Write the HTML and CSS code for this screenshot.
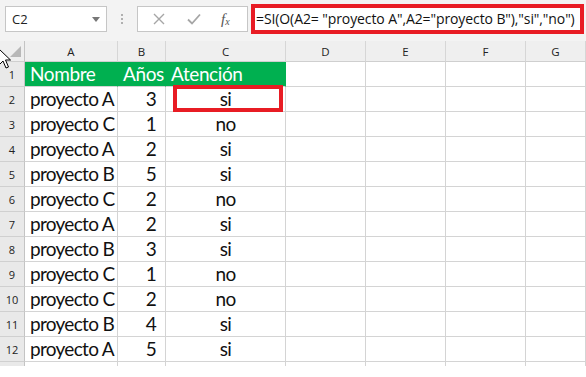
FILE: index.html
```html
<!DOCTYPE html>
<html lang="es">
<head>
<meta charset="utf-8">
<title>Excel SI(O())</title>
<link rel="stylesheet" href="styles.css">
</head>
<body>
<div class="toolbar">
  <div class="namebox"><span class="ref">C2</span><span class="caret"></span></div>
  <div class="dots"><i></i><i></i><i></i></div>
  <div class="fbuttons">
    <svg class="ico" width="12" height="12" viewBox="0 0 12 12"><path d="M1 1 L11 11 M11 1 L1 11" stroke="#a6a6a6" stroke-width="1.4" fill="none"/></svg>
    <svg class="ico" width="14" height="12" viewBox="0 0 14 12"><path d="M1 6.5 L5 10.5 L13 1.5" stroke="#a6a6a6" stroke-width="1.8" fill="none"/></svg>
    <span class="fx">f<sub>x</sub></span>
  </div>
  <div class="formula">=SI(O(A2= "proyecto A",A2="proyecto B"),"si","no")</div>
</div>
<div class="sheet">
  <div class="corner"><span class="tri"></span></div><div class="ch">A</div><div class="ch">B</div><div class="ch">C</div><div class="ch">D</div><div class="ch">E</div><div class="ch">F</div><div class="ch">G</div>

  <div class="rh">1</div><div class="c g">Nombre</div><div class="c g">Años</div><div class="c g">Atención</div><div class="c"></div><div class="c"></div><div class="c"></div><div class="c"></div>
  <div class="rh">2</div><div class="c">proyecto A</div><div class="c n">3</div><div class="c m">si</div><div class="c"></div><div class="c"></div><div class="c"></div><div class="c"></div>
  <div class="rh">3</div><div class="c">proyecto C</div><div class="c n">1</div><div class="c m">no</div><div class="c"></div><div class="c"></div><div class="c"></div><div class="c"></div>
  <div class="rh">4</div><div class="c">proyecto A</div><div class="c n">2</div><div class="c m">si</div><div class="c"></div><div class="c"></div><div class="c"></div><div class="c"></div>
  <div class="rh">5</div><div class="c">proyecto B</div><div class="c n">5</div><div class="c m">si</div><div class="c"></div><div class="c"></div><div class="c"></div><div class="c"></div>
  <div class="rh">6</div><div class="c">proyecto C</div><div class="c n">2</div><div class="c m">no</div><div class="c"></div><div class="c"></div><div class="c"></div><div class="c"></div>
  <div class="rh">7</div><div class="c">proyecto A</div><div class="c n">2</div><div class="c m">si</div><div class="c"></div><div class="c"></div><div class="c"></div><div class="c"></div>
  <div class="rh">8</div><div class="c">proyecto B</div><div class="c n">3</div><div class="c m">si</div><div class="c"></div><div class="c"></div><div class="c"></div><div class="c"></div>
  <div class="rh">9</div><div class="c">proyecto C</div><div class="c n">1</div><div class="c m">no</div><div class="c"></div><div class="c"></div><div class="c"></div><div class="c"></div>
  <div class="rh">10</div><div class="c">proyecto C</div><div class="c n">2</div><div class="c m">no</div><div class="c"></div><div class="c"></div><div class="c"></div><div class="c"></div>
  <div class="rh">11</div><div class="c">proyecto B</div><div class="c n">4</div><div class="c m">si</div><div class="c"></div><div class="c"></div><div class="c"></div><div class="c"></div>
  <div class="rh">12</div><div class="c">proyecto A</div><div class="c n">5</div><div class="c m">si</div><div class="c"></div><div class="c"></div><div class="c"></div><div class="c"></div>
  <div class="rh stub"></div><div class="c stub"></div><div class="c stub"></div><div class="c stub"></div><div class="c stub"></div><div class="c stub"></div><div class="c stub"></div><div class="c stub"></div>

  <div class="highlight"></div>
  <svg class="cursor" width="14" height="22" viewBox="0 0 14 22"><path d="M1 1 L1 17 L5 13 L8 20 L10.5 19 L7.5 12 L12.5 12 Z" fill="#fff" stroke="#000" stroke-width="1" stroke-linejoin="miter"/></svg>
</div>
</body>
</html>
```

FILE: styles.css
```css
* { box-sizing: border-box; }
html, body { margin: 0; padding: 0; background: #fff; }
body { width: 586px; height: 377px; overflow: hidden; font-family: "Open Sans", "Noto Sans", sans-serif; }

.toolbar {
  height: 41px;
  background: #f3f3f3;
  display: flex;
  align-items: flex-start;
  padding-top: 4px;
}
.namebox {
  margin-top: 2px;
  margin-left: 5px;
  width: 102px;
  height: 26px;
  background: #fff;
  border: 1px solid #c6c6c6;
  display: flex;
  align-items: center;
  justify-content: space-between;
  padding: 0 6px 0 6px;
  font-size: 13px;
  color: #222;
}
.caret {
  width: 0; height: 0;
  border-left: 4.5px solid transparent;
  border-right: 4.5px solid transparent;
  border-top: 5px solid #777;
}
.dots {
  width: 30px;
  display: flex;
  flex-direction: column;
  align-items: center;
  gap: 2px;
  padding-top: 10px;
}
.dots i { display: block; width: 2px; height: 2px; background: #b0b0b0; }
.fbuttons {
  margin-top: 2px;
  width: 111px;
  height: 26px;
  background: #fff;
  border: 1px solid #c6c6c6;
  display: flex;
  align-items: center;
  padding-left: 15px;
  gap: 22px;
}
.fx {
  font-family: "Liberation Serif", serif;
  font-style: italic;
  font-size: 15px;
  color: #555;
  margin-left: -2px;
}
.fx sub { font-size: 10px; vertical-align: -1px; }
.formula {
  margin-left: 3px;
  width: 333px;
  height: 30px;
  border: 4px solid #e81c24;
  background: #fff;
  font-family: "Open Sans", sans-serif;
  font-size: 14px;
  color: #111;
  padding-left: 1px;
  line-height: 21px;
  white-space: nowrap;
  overflow: hidden;
  letter-spacing: -0.1px;
}

.sheet {
  position: relative;
  display: grid;
  grid-template-columns: 25px 93px 48px 120px 80px 80px 80px 60px;
  grid-template-rows: 21px repeat(12, 25px) 4px;
}
.corner, .ch, .rh {
  background: #efefef;
  border-right: 1px solid #cfcfcf;
  border-bottom: 1px solid #cfcfcf;
  font-family: "Open Sans", sans-serif;
  font-size: 11.5px;
  color: #222;
  display: flex;
  align-items: center;
  justify-content: center;
}
.ch { border-right-color: #d6d6d6; }
.rh { background: #e9e9e9; border-right: 1px solid #c4c4c4; border-bottom-color: #d0d0d0; font-size: 11px; }
.corner { position: relative; border-right: 1px solid #c4c4c4; }
.tri {
  position: absolute;
  right: 3px;
  bottom: 4px;
  width: 0; height: 0;
  border-left: 11px solid transparent;
  border-bottom: 11px solid #b8b8b8;
}
.c {
  border-right: 1px solid #d4d4d4;
  border-bottom: 1px solid #d4d4d4;
  font-family: "Lato", sans-serif;
  font-size: 19px;
  letter-spacing: -0.7px;
  color: #111;
  display: flex;
  align-items: flex-end;
  padding: 0 0 1px 5px;
  white-space: nowrap;
}
.c.g { background: #00b050; border-right-color: #00b050; color: #fff; letter-spacing: -0.4px; }
.c.n { justify-content: flex-end; padding-right: 9px; }
.c.m { justify-content: center; padding-left: 0; }
.stub { border-bottom: none; }
.highlight {
  position: absolute;
  left: 173px;
  top: 44px;
  width: 110px;
  height: 27px;
  border: 4px solid #e81c24;
}
.cursor {
  position: absolute;
  left: -2px;
  top: 7px;
}
```
